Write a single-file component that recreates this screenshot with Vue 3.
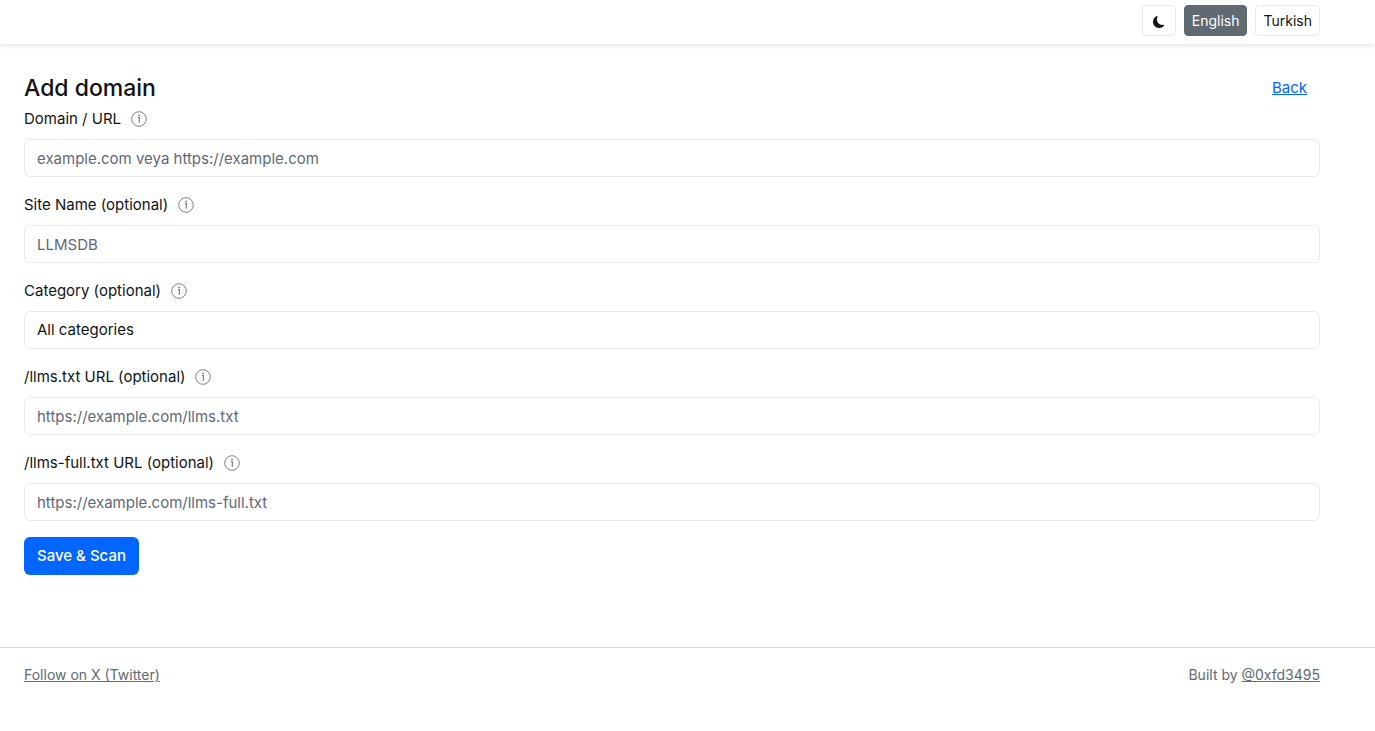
<script setup>
import { ref } from 'vue'

const language = ref('English')
const languages = ['English', 'Turkish']
const fields = [
  { id: 'domain', label: 'Domain / URL', placeholder: 'example.com veya https://example.com' },
  { id: 'site-name', label: 'Site Name (optional)', placeholder: 'LLMSDB' },
  { id: 'category', label: 'Category (optional)', options: ['All categories'] },
  { id: 'llms', label: '/llms.txt URL (optional)', placeholder: 'https://example.com/llms.txt' },
  { id: 'llms-full', label: '/llms-full.txt URL (optional)', placeholder: 'https://example.com/llms-full.txt' },
]
</script>

<template>
  <div class="page">
    <header class="topbar">
      <button type="button" class="tool" aria-label="Dark mode">
        <svg class="moon" viewBox="0 0 16 16" fill="currentColor" aria-hidden="true">
          <path d="M6 .278a.77.77 0 0 1 .08.858 7.2 7.2 0 0 0-.878 3.46c0 4.021 3.278 7.277 7.318 7.277q.792-.001 1.533-.16a.79.79 0 0 1 .81.316.73.73 0 0 1-.031.893A8.35 8.35 0 0 1 8.344 16C3.734 16 0 12.286 0 7.71 0 4.266 2.114 1.312 5.124.06A.75.75 0 0 1 6 .278" />
        </svg>
      </button>
      <button
        v-for="name in languages"
        :key="name"
        type="button"
        class="tool"
        :class="{ active: name === language }"
        @click="language = name"
      >{{ name }}</button>
    </header>

    <main class="content">
      <div class="heading">
        <h1>Add domain</h1>
        <a href="#" class="back">Back</a>
      </div>
      <form @submit.prevent>
        <div v-for="field in fields" :key="field.id" class="field">
          <div class="label-row">
            <label :for="field.id">{{ field.label }}</label>
            <svg class="info" viewBox="0 0 16 16" fill="none" stroke="currentColor" aria-hidden="true">
              <circle cx="8" cy="8" r="7.3" stroke-width="0.9" />
              <path d="M7 6.5h1.300v5.200" stroke-width="1.100" />
              <circle cx="8.100" cy="4.400" r="0.850" fill="currentColor" stroke="none" />
            </svg>
          </div>
          <select v-if="field.options" :id="field.id" class="control">
            <option v-for="option in field.options" :key="option">{{ option }}</option>
          </select>
          <input v-else :id="field.id" type="text" class="control" :placeholder="field.placeholder" />
        </div>
        <button type="submit" class="save">Save &amp; Scan</button>
      </form>
    </main>

    <footer class="footer">
      <a href="#">Follow on X (Twitter)</a>
      <span>Built by <a href="#">@0xfd3495</a></span>
    </footer>
  </div>
</template>

<style>
body {
  background: #fff;
}
</style>

<style scoped>
.page {
  font-family: Inter, "Liberation Sans", sans-serif;
  font-size: 15px;
  line-height: 24px;
  color: #111416;
}
.page * {
  box-sizing: border-box;
}
.topbar {
  display: flex;
  justify-content: flex-end;
  align-items: flex-start;
  gap: 8px;
  height: 44px;
  padding: 5px 55px 0 24px;
  box-shadow: 0 2px 4px rgba(0, 0, 0, 0.1);
}
.tool {
  display: flex;
  align-items: center;
  height: 31px;
  padding: 0 7px;
  border: 1px solid #e9eaec;
  border-radius: 4px;
  background: #fff;
  color: #111416;
  font: 400 14px/21px Inter, "Liberation Sans", sans-serif;
}
.tool.active {
  border-color: #606a72;
  background: #606a72;
  color: #fff;
}
.moon {
  width: 12px;
  height: 12px;
  margin: 2px 3px 0;
}
.content {
  padding: 25px 55px 72px 24px;
}
.heading {
  display: flex;
  justify-content: space-between;
  align-items: center;
}
h1 {
  margin: 0;
  font-size: 23px;
  line-height: 29px;
  font-weight: 500;
}
.back {
  padding: 7px 13px;
  color: #0066ff;
}
.field {
  margin-bottom: 16px;
}
.label-row {
  display: flex;
  align-items: center;
  gap: 10px;
  margin-bottom: 8px;
}
.info {
  width: 16px;
  height: 16px;
  color: #6c757d;
}
.control {
  display: block;
  width: 100%;
  height: 38px;
  padding: 6px 12px;
  border: 1px solid #e9eaec;
  border-radius: 6px;
  background: #fff;
  color: #111416;
  font: 400 15px/24px Inter, "Liberation Sans", sans-serif;
  appearance: none;
}
.control::placeholder {
  color: #606975;
  opacity: 1;
}
.save {
  display: block;
  height: 38px;
  padding: 0 13px;
  border: 0;
  border-radius: 6px;
  background: #0066ff;
  color: #fff;
  font: 500 15px/24px Inter, "Liberation Sans", sans-serif;
}
.footer {
  display: flex;
  justify-content: space-between;
  padding: 16px 55px 24px 24px;
  border-top: 1px solid #dcdddf;
  color: #606975;
  font-size: 14px;
  line-height: 22px;
}
.footer a {
  color: #606a72;
}
</style>
